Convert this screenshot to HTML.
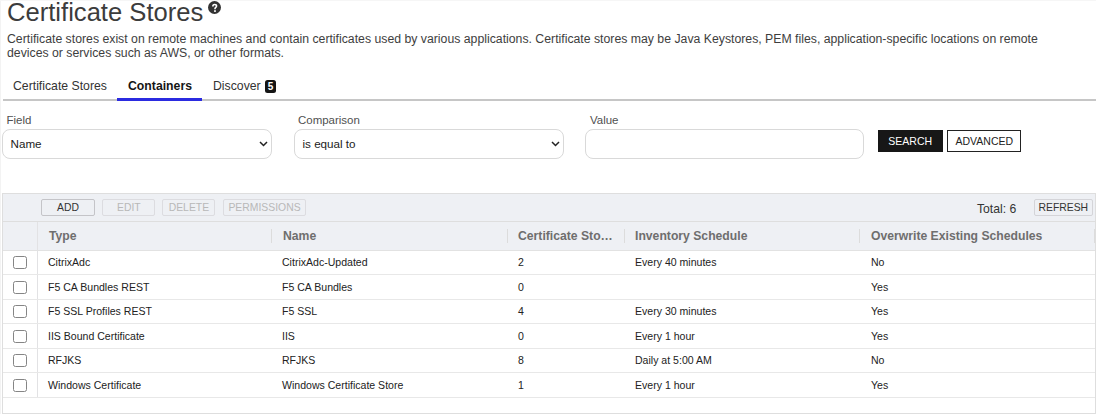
<!DOCTYPE html>
<html><head><meta charset="utf-8">
<style>
*{box-sizing:border-box;margin:0;padding:0}
html,body{width:1096px;height:414px;overflow:hidden;background:#fff}
body{font-family:"Liberation Sans",sans-serif;color:#333;position:relative}
div{position:absolute;white-space:nowrap}
.pgl{left:0;top:0;width:1px;height:414px;background:#f3f3f3}
.pgt{left:0;top:0;width:1096px;height:1px;background:#f6f6f6}
.h1{left:7px;top:-2.8px;font-size:25.6px;color:#3c3c3c;line-height:30px}
.help{left:207.5px;top:1.2px;width:13.2px;height:13.2px;border-radius:50%;background:#333}
.help svg{position:absolute;left:0;top:0}
.desc{left:7px;top:31.8px;width:1060px;font-size:12.27px;line-height:14px;color:#3e3e3e;white-space:normal}
.tabline{left:3px;top:99px;width:1093px;height:2px;background:#c6c6c6}
.tab{top:77.7px;font-size:12.25px;line-height:16px;color:#333}
.tab.active{font-weight:bold;color:#151515}
.ul{left:117px;top:98px;width:85px;height:3px;background:#2b2be0}
.badge{left:264.6px;top:79.7px;width:11.9px;height:13.3px;border-radius:2.5px;background:#151515;color:#fff;font-size:10px;font-weight:bold;line-height:13.5px;text-align:center}
.lbl{top:111.5px;font-size:11.47px;line-height:16px;color:#505050}
.sel{top:129px;height:30px;border:1px solid #d9d9d9;border-radius:8px;background:#fff;font-size:11.65px;line-height:28px;padding-left:7.5px;color:#222}
.sel svg{position:absolute;right:3px;top:10.8px}
.btn{font-size:10.5px;text-align:center}
.grid{left:2px;top:193px;width:1094px;height:221px;border:1px solid #dedede;background:#fff}
.tb{left:3px;top:194px;width:1092px;height:56px;background:#eef0f4}
.hl{height:1px;background:#dedede}
.tbtn{top:199px;height:17px;border:1px solid #dcdce0;border-radius:2px;font-size:10.4px;line-height:15px;text-align:center;color:#b8b8b8}
.hc{top:227.6px;font-size:12.2px;font-weight:bold;color:#6e6e6e;line-height:16px}
.sep{top:229px;width:1px;height:14px;background:#dcdcdc}
.rl{left:3px;width:1092px;height:1px;background:#e8e8e8}
.cell{font-size:10.55px;color:#222;line-height:14px}
.cb{left:13px;width:13.8px;height:13.8px;border:1px solid #858585;border-radius:2.5px;background:#fff}
</style></head><body>
<div class="pgl"></div><div class="pgt"></div>
<div class="h1">Certificate Stores</div>
<div class="help"><svg width="13.2" height="13.2" viewBox="0 0 13 13"><path d="M4.8 5.3 Q4.8 3.5 6.6 3.5 Q8.4 3.5 8.4 5.0 Q8.4 5.9 7.4 6.5 Q6.9 6.8 6.9 7.6 V8.1" stroke="#fff" stroke-width="1.6" fill="none"/><rect x="6.0" y="9.1" width="1.75" height="1.65" fill="#fff"/></svg></div>
<div class="desc">Certificate stores exist on remote machines and contain certificates used by various applications. Certificate stores may be Java Keystores, PEM files, application-specific locations on remote devices or services such as AWS, or other formats.</div>
<div class="tabline"></div>
<div class="tab" style="left:13px">Certificate Stores</div>
<div class="tab active" style="left:128px">Containers</div>
<div class="tab" style="left:213px">Discover</div><div class="badge">5</div>
<div class="ul"></div>
<div class="lbl" style="left:6.5px">Field</div>
<div class="lbl" style="left:298px">Comparison</div>
<div class="lbl" style="left:590px">Value</div>
<div class="sel" style="left:2px;width:270px">Name<svg width="9" height="6" viewBox="0 0 9 6"><path d="M1 1 L4.5 4.5 L8 1" stroke="#222" stroke-width="1.5" fill="none"/></svg></div>
<div class="sel" style="left:294px;width:270px">is equal to<svg width="9" height="6" viewBox="0 0 9 6"><path d="M1 1 L4.5 4.5 L8 1" stroke="#222" stroke-width="1.5" fill="none"/></svg></div>
<div class="sel" style="left:585px;width:279px"></div>
<div class="btn" style="left:877.5px;top:130px;width:65.5px;height:22px;line-height:22px;background:#171717;color:#fff">SEARCH</div>
<div class="btn" style="left:947.4px;top:130px;width:73.8px;height:22px;line-height:20px;border:1.3px solid #222;color:#222;background:#fff">ADVANCED</div>
<div class="grid"></div>
<div class="tb"></div>
<div class="hl" style="left:3px;top:221px;width:1092px"></div>
<div class="hl" style="left:3px;top:250px;width:1092px;background:#e2e2e2"></div>
<div class="tbtn" style="left:41px;width:54px;color:#333;border-color:#c4c4c8">ADD</div>
<div class="tbtn" style="left:102.2px;width:53.3px">EDIT</div>
<div class="tbtn" style="left:162.4px;width:53px">DELETE</div>
<div class="tbtn" style="left:223.3px;width:82.4px">PERMISSIONS</div>
<div style="left:977px;top:202px;font-size:12.2px;line-height:14px;color:#333">Total: 6</div>
<div class="tbtn" style="left:1033.8px;width:59px;color:#333;border-color:#d4d4d8">REFRESH</div>
<div style="left:37px;top:222px;width:1px;height:175px;background:#e2e2e4"></div>
<div class="sep" style="left:271px"></div>
<div class="sep" style="left:507px"></div>
<div class="sep" style="left:624px"></div>
<div class="sep" style="left:859px"></div>
<div class="sep" style="left:1094px"></div>
<div class="hc" style="left:49px">Type</div>
<div class="hc" style="left:283px">Name</div>
<div class="hc" style="left:518px">Certificate Sto…</div>
<div class="hc" style="left:635px">Inventory Schedule</div>
<div class="hc" style="left:871px">Overwrite Existing Schedules</div>
<div class="rl" style="top:274px"></div>
<div class="cb" style="top:255.7px"></div>
<div class="cell" style="left:48px;top:255.1px">CitrixAdc</div>
<div class="cell" style="left:282px;top:255.1px">CitrixAdc-Updated</div>
<div class="cell" style="left:518px;top:255.1px">2</div>
<div class="cell" style="left:635px;top:255.1px">Every 40 minutes</div>
<div class="cell" style="left:871px;top:255.1px">No</div>
<div class="rl" style="top:299px"></div>
<div class="cb" style="top:280.7px"></div>
<div class="cell" style="left:48px;top:280.1px">F5 CA Bundles REST</div>
<div class="cell" style="left:282px;top:280.1px">F5 CA Bundles</div>
<div class="cell" style="left:518px;top:280.1px">0</div>
<div class="cell" style="left:871px;top:280.1px">Yes</div>
<div class="rl" style="top:323px"></div>
<div class="cb" style="top:304.7px"></div>
<div class="cell" style="left:48px;top:304.1px">F5 SSL Profiles REST</div>
<div class="cell" style="left:282px;top:304.1px">F5 SSL</div>
<div class="cell" style="left:518px;top:304.1px">4</div>
<div class="cell" style="left:635px;top:304.1px">Every 30 minutes</div>
<div class="cell" style="left:871px;top:304.1px">Yes</div>
<div class="rl" style="top:348px"></div>
<div class="cb" style="top:329.7px"></div>
<div class="cell" style="left:48px;top:329.1px">IIS Bound Certificate</div>
<div class="cell" style="left:282px;top:329.1px">IIS</div>
<div class="cell" style="left:518px;top:329.1px">0</div>
<div class="cell" style="left:635px;top:329.1px">Every 1 hour</div>
<div class="cell" style="left:871px;top:329.1px">Yes</div>
<div class="rl" style="top:372px"></div>
<div class="cb" style="top:353.7px"></div>
<div class="cell" style="left:48px;top:353.1px">RFJKS</div>
<div class="cell" style="left:282px;top:353.1px">RFJKS</div>
<div class="cell" style="left:518px;top:353.1px">8</div>
<div class="cell" style="left:635px;top:353.1px">Daily at 5:00 AM</div>
<div class="cell" style="left:871px;top:353.1px">No</div>
<div class="rl" style="top:397px"></div>
<div class="cb" style="top:378.7px"></div>
<div class="cell" style="left:48px;top:378.1px">Windows Certificate</div>
<div class="cell" style="left:282px;top:378.1px">Windows Certificate Store</div>
<div class="cell" style="left:518px;top:378.1px">1</div>
<div class="cell" style="left:635px;top:378.1px">Every 1 hour</div>
<div class="cell" style="left:871px;top:378.1px">Yes</div>
</body></html>
